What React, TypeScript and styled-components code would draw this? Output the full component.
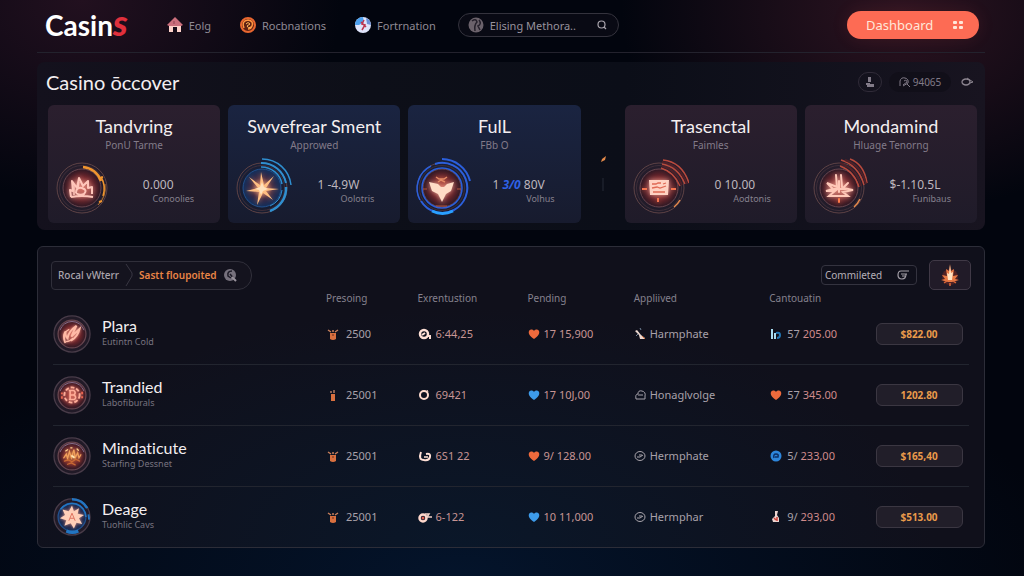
import React, { useId } from "react";
import styled, { createGlobalStyle } from "styled-components";

type Tone = "warm" | "cool";
type Glyph =
  | "crown"
  | "star"
  | "gem"
  | "card"
  | "spark"
  | "feather"
  | "gear"
  | "dust"
  | "sun";

interface Deck {
  title: string;
  sub: string;
  value: React.ReactNode;
  label: string;
  tone: Tone;
  glyph: Glyph;
}

interface Player {
  name: string;
  sub: string;
  glyph: Glyph;
  score: string;
  scoreIcon: MarkName;
  token: string;
  tokenIcon: MarkName;
  pending: string;
  pendingColor: string;
  status: string;
  statusIcon: MarkName;
  prefix: string;
  total: string;
  totalIcon: MarkName;
  price: string;
}

type MarkName =
  | "jar"
  | "pot"
  | "coinTail"
  | "ring"
  | "loop"
  | "coinKey"
  | "brush"
  | "cloud"
  | "check"
  | "bars"
  | "heart"
  | "disc"
  | "flask";

const glyphs: Record<Glyph, React.ReactNode> = {
  crown: (
    <g fill="none" stroke="#ffc6ba" strokeWidth="2" strokeLinejoin="round">
      <path d="M19 39 L18 32 L21 33 L20 23 L25 30 L27 20 L31 28 L36 23 L36 30 L40 29 L40 36" />
      <path d="M24 35 Q24 29 30 30 Q36 32 32 36 Q28 38 24 35 M19 39 Q30 37 41 39" />
      <path d="M22 27 V37 M27 24 L26 31" strokeWidth="1.5" />
    </g>
  ),
  star: (
    <g fill="#ffbf83">
      <path d="M29 14 L32 27 L42 18 L34 30 L47 31 L34 33 L41 42 L31 35 L25 47 L27 34 L14 33 L26 30 L17 19 L28 27 Z" />
      <path d="M30 24 L32 29 L36 31 L31 33 L29 37 L27 32 L23 31 L28 29 Z" fill="#ffe2bd" />
    </g>
  ),
  gem: (
    <g fill="#ffdcc6">
      <path d="M17 24 L26 26 L29 29 L32 29 L35 26 L42 24 L39 33 L34 36 L30 44 L26 36 L20 33 Z" />
      <path d="M24 19 L27 21 H32 L35 19 M26 24 L29 22 L33 24" stroke="#e58b66" strokeWidth="1.5" fill="none" />
      <path d="M11 31 H15 M45 31 H49 M24 48 H35" stroke="#b4553d" />
    </g>
  ),
  card: (
    <g>
      <path d="M20 22 H40 L39 37 H21 Z" fill="#ffd2c2" />
      <path
        d="M23 26 H27 L29 25 H32 M34 26 L37 25 M23 30 L28 29 L31 30 L37 28 M24 34 H36"
        stroke="#e06a54"
        strokeWidth="1.3"
        fill="none"
      />
      <path d="M13 31 H18 M42 31 H47 M29 40 V44" stroke="#f2734f" strokeWidth="2" />
    </g>
  ),
  spark: (
    <g fill="none" stroke="#ffc8b8" strokeWidth="2" strokeLinecap="round">
      <path d="M27 17 L28 29 L18 25 L24 31 L17 33 L26 33 L20 38 H39 L34 34 L44 32 L34 30 L39 25" />
      <path d="M32 17 L33 29 M30 23 V34 M25 31 H37" />
      <path d="M30 41 V44" stroke="#ff7b4a" />
    </g>
  ),
  feather: (
    <g fill="none" stroke="#ffb9a5" strokeWidth="3" strokeLinecap="round">
      <path d="M19 43 Q15 33 20 26 Q19 34 23 37 Q24 26 37 17 Q32 27 29 34 L42 22 Q39 34 29 40" />
      <path d="M21 42 Q27 42 31 37 M18 28 L25 23" strokeWidth="2" />
    </g>
  ),
  gear: (
    <g fill="none" stroke="#ffad98" strokeWidth="3">
      <circle cx="30" cy="30" r="12" strokeDasharray="6 3" />
      <path d="M25 23 H33 Q37 26 33 30 Q38 33 34 37 H25 M27 24 V36 M27 30 H33" strokeWidth="2.5" />
      <path d="M14 26 V29 M14 32 V36 M46 25 V29 M46 32 V35" stroke="#e96550" />
    </g>
  ),
  dust: (
    <g fill="none" stroke="#f0a05c" strokeWidth="2" strokeLinecap="round">
      <path d="M17 33 L21 27 L23 34 L26 23 L29 33 L33 20 L35 33 L39 25 L41 33 L44 28" />
      <path d="M18 38 L24 36 L30 39 L36 35 L42 38 M23 43 L29 41 L35 44" stroke="#c96a35" />
      <path d="M20 22 L23 20 M38 19 L40 21 M28 17 H30" stroke="#ffd08f" />
      <path d="M30 30 L33 32" stroke="#ffe2ad" strokeWidth="3" />
    </g>
  ),
  sun: (
    <g>
      <path
        d="M30 12 L33 21 L41 16 L39 25 L49 27 L41 32 L46 41 L37 39 L33 48 L28 40 L18 44 L21 35 L11 32 L19 27 L15 18 L25 21 Z"
        fill="#ffcfb8"
      />
      <path d="M25 36 L30 24 L35 36 M27 32 H33" stroke="#dd705c" strokeWidth="1.5" fill="none" />
    </g>
  ),
};

const arcs: Partial<Record<Glyph, React.ReactNode>> = {
  crown: (
    <g stroke="#f0952f" fill="none">
      <path d="M31 9 A21 21 0 0 1 49 23" strokeWidth="2.5" />
      <path d="M49 19 A23 23 0 0 1 51 38" strokeWidth="1.5" />
      <path d="M53 26 A24 24 0 0 1 46 47" strokeWidth="1" opacity="0.7" />
      <path d="M48 20 L51 19 M47 44 L50 43" strokeWidth="2" />
    </g>
  ),
  star: (
    <g stroke="#2f8fd0" fill="none">
      <path d="M30 1 A29 29 0 0 1 59 27" strokeWidth="1.5" />
      <path d="M29 5 A25 25 0 0 1 54 25" strokeWidth="2" />
      <path d="M29 9 A21 21 0 0 1 50 26" strokeWidth="1.5" />
      <path d="M54 29 A24 24 0 0 1 38 53" strokeWidth="2.5" />
      <path d="M50 32 A20 20 0 0 1 38 48" strokeWidth="1" />
    </g>
  ),
  gem: (
    <g stroke="#2b5fdc" fill="none">
      <path d="M30 1 A29 29 0 0 1 58 23" strokeWidth="2" />
      <path d="M23 6 A25 25 0 1 1 9 43" strokeWidth="2" />
      <path d="M8 42 A25 25 0 0 1 19 8" strokeWidth="1.5" />
      <circle cx="30" cy="30" r="20" strokeWidth="1.5" />
      <path d="M20 53 A25 25 0 0 0 41 53" stroke="#2aa0ff" strokeWidth="3" />
    </g>
  ),
  card: (
    <g stroke="#b94a3d" fill="none" strokeWidth="1.5">
      <path d="M34 2 Q53 4 60 25" />
      <path d="M33 6 Q49 9 56 26" />
      <path d="M32 10 Q45 14 51 28" />
      <path d="M33 4 Q51 7 58 26 M33 8 Q47 12 53 27" stroke="#4f2028" strokeWidth="2" />
      <path d="M51 42 A24 24 0 0 1 45 49" stroke="#e58a4b" />
    </g>
  ),
  spark: (
    <g stroke="#b94a3d" fill="none" strokeWidth="1.5">
      <path d="M41 1 Q55 6 58 25" />
      <path d="M32 2 Q49 7 55 27" />
      <path d="M31 8 Q45 13 50 29" />
      <path d="M36 2 Q52 7 57 26 M31 5 Q47 10 52 28" stroke="#4f2028" strokeWidth="2" />
      <path d="M51 41 A24 24 0 0 1 45 49" stroke="#e58a4b" />
    </g>
  ),
  sun: (
    <g stroke="#2275c2" fill="none">
      <path d="M30 2 A28 28 0 0 1 54 16" strokeWidth="4" />
      <path d="M12 18 A22 22 0 0 1 52 30" strokeWidth="2.5" />
      <path d="M56 26 L57 34" strokeWidth="3" />
      <path d="M21 52 A23 23 0 0 0 40 52" strokeWidth="5" />
    </g>
  ),
};

const Emblem: React.FC<{ glyph: Glyph; size: number; framed?: boolean }> = ({
  glyph,
  size,
  framed,
}) => {
  const id = useId();
  const blue = glyph === "star" || glyph === "sun";
  return (
    <svg width={size} height={size} viewBox="0 0 60 60" aria-hidden="true">
      <defs>
        <radialGradient id={`${id}core`}>
          <stop offset="0" stopColor={glyph === "dust" ? "#a65427" : "#c8493c"} />
          <stop offset="0.55" stopColor={blue ? "#3a2440" : "#74262b"} />
          <stop offset="1" stopColor={blue ? "#12305c" : "#2c1824"} />
        </radialGradient>
        <filter id={`${id}glow`} x="-30%" y="-30%" width="160%" height="160%">
          <feGaussianBlur stdDeviation="2.5" />
        </filter>
      </defs>
      {framed && (
        <circle cx="30" cy="30" r="28.5" fill="#211a27" stroke="#493c49" strokeWidth="2" />
      )}
      {!framed && (
        <g fill="none" stroke="#5d4245">
          <circle cx="30" cy="30" r="25" />
          <circle cx="30" cy="30" r="22.5" stroke="#3e2e39" />
        </g>
      )}
      <circle
        cx="30"
        cy="30"
        r={framed ? 22 : 19}
        fill={`url(#${id}core)`}
        stroke={blue ? "#23508c" : "#69464f"}
        strokeWidth={framed ? 2 : 1}
      />
      {framed && !blue && (
        <path d="M11 24 A20 20 0 0 1 49 24" stroke="#8c7390" strokeWidth="1.5" fill="none" />
      )}
      {arcs[glyph]}
      <g filter={`url(#${id}glow)`} opacity="0.7">
        {glyphs[glyph]}
      </g>
      {glyphs[glyph]}
    </svg>
  );
};

const marks: Record<MarkName, React.ReactNode> = {
  jar: (
    <>
      <path d="M4 6 H10 V12 Q7 14 4 12 Z" fill="#d9703f" />
      <path d="M2 3 L5 5 M12 3 L9 5 M6 4 H8" stroke="#c9805c" strokeWidth="1.5" />
      <path d="M6 8 H8" stroke="#6e2d1c" />
    </>
  ),
  pot: (
    <>
      <path d="M5 6 H9 V13 H5 Z" fill="#d9703f" />
      <path d="M4 4 H6 M8 2 V5" stroke="#b07a62" strokeWidth="1.5" />
    </>
  ),
  coinTail: (
    <>
      <circle cx="6" cy="7" r="4" fill="none" stroke="#ffe0d6" strokeWidth="2.5" />
      <path d="M4 8 L7 6 M9 9 H12 V12" stroke="#ffe0d6" strokeWidth="2" fill="none" />
    </>
  ),
  ring: (
    <>
      <circle cx="6" cy="7" r="4" fill="none" stroke="#ffdccf" strokeWidth="2" />
      <path d="M9 2 L10 4" stroke="#ffdccf" fill="none" />
    </>
  ),
  loop: (
    <>
      <path d="M3 3 Q0 11 6 11 M8 5 Q13 4 12 8 Q11 12 6 11" stroke="#ffe0d6" strokeWidth="2" fill="none" />
      <path d="M6 8 H10" stroke="#ffe0d6" strokeWidth="1.5" />
    </>
  ),
  coinKey: (
    <>
      <circle cx="5" cy="8" r="3.5" fill="none" stroke="#ffd8cc" strokeWidth="2.5" />
      <path d="M7 4 H11 L9 7 H14" stroke="#f3d2c8" strokeWidth="1.5" fill="none" />
      <circle cx="5" cy="8" r="1.5" fill="#df5b4d" />
    </>
  ),
  brush: (
    <>
      <path d="M1 4 L3 3 L7 8 L11 11 L10 12 H6 L5 8 Z" fill="#ecd8d0" />
      <path d="M6 1 L7 3 M2 9 L4 7" stroke="#74859a" />
      <path d="M8 9 L11 12" stroke="#e07a45" />
    </>
  ),
  cloud: (
    <path
      d="M2 11 Q1 6 4 6 Q4 2 8 3 Q12 4 11 8 V11 Z M4 7 H9"
      stroke="#a5a1aa"
      fill="none"
    />
  ),
  check: (
    <>
      <ellipse cx="6" cy="7" rx="5" ry="4.5" stroke="#aaa5ac" fill="none" />
      <path d="M3 8 L6 8 L9 6 M5 6 H8" stroke="#aaa5ac" fill="none" />
    </>
  ),
  bars: (
    <>
      <path d="M3 2 V12 M6 6 V12" stroke="#a9dcf0" strokeWidth="2" />
      <path d="M7 6 Q11 5 11 8 Q11 11 8 11" stroke="#2276b4" strokeWidth="2" fill="none" />
    </>
  ),
  heart: (
    <path
      d="M7 12 C3 9 1 7 2 4 C3 2 6 2 7 4 C8 2 11 2 12 4 C13 7 11 9 7 12 Z"
      fill="currentColor"
    />
  ),
  disc: (
    <>
      <circle cx="7" cy="7" r="5.5" fill="#2d86dc" />
      <path d="M5 9 Q4 5 7 5 Q10 5 9 8 H6" stroke="#0c2f66" strokeWidth="1.5" fill="none" />
    </>
  ),
  flask: (
    <>
      <path d="M6 1 H9 L8 5 L10 8 V12 H4 L3 9 L6 6 Z" fill="#ecd3cf" />
      <path d="M5 8 L7 10 M8 7 V11" stroke="#cc4038" strokeWidth="1.5" />
    </>
  ),
};

const Mark: React.FC<{ name: MarkName; color?: string }> = ({ name, color }) => (
  <svg width="14" height="14" viewBox="0 0 14 14" color={color} aria-hidden="true">
    {marks[name]}
  </svg>
);

const decks: Deck[] = [
  { title: "Tandvring", sub: "PonU Tarme", value: "0.000", label: "Conoolies", tone: "warm", glyph: "crown" },
  { title: "Swvefrear Sment", sub: "Approwed", value: "1 -4.9W", label: "Oolotris", tone: "cool", glyph: "star" },
  {
    title: "FulL",
    sub: "FBb O",
    value: (
      <>
        1 <b>3/0</b> 80V
      </>
    ),
    label: "Volhus",
    tone: "cool",
    glyph: "gem",
  },
  { title: "Trasenctal", sub: "Faimles", value: "0 10.00", label: "Aodtonis", tone: "warm", glyph: "card" },
  { title: "Mondamind", sub: "Hluage Tenorng", value: "$-1.10.5L", label: "Funibaus", tone: "warm", glyph: "spark" },
];

const players: Player[] = [
  {
    name: "Plara", sub: "Eutintn Cold", glyph: "feather",
    score: "2500", scoreIcon: "jar", token: "6:44,25", tokenIcon: "coinTail",
    pending: "17 15,900", pendingColor: "#ee6a3c",
    status: "Harmphate", statusIcon: "brush",
    prefix: "57", total: "205.00", totalIcon: "bars", price: "$822.00",
  },
  {
    name: "Trandied", sub: "Labofiburals", glyph: "gear",
    score: "25001", scoreIcon: "pot", token: "69421", tokenIcon: "ring",
    pending: "17 10J,00", pendingColor: "#3d9bea",
    status: "Honaglvolge", statusIcon: "cloud",
    prefix: "57", total: "345.00", totalIcon: "heart", price: "1202.80",
  },
  {
    name: "Mindaticute", sub: "Starfing Dessnet", glyph: "dust",
    score: "25001", scoreIcon: "jar", token: "6S1 22", tokenIcon: "loop",
    pending: "9/ 128.00", pendingColor: "#ee6a3c",
    status: "Hermphate", statusIcon: "check",
    prefix: "5/", total: "233,00", totalIcon: "disc", price: "$165,40",
  },
  {
    name: "Deage", sub: "Tuohlic Cavs", glyph: "sun",
    score: "25001", scoreIcon: "jar", token: "6-122", tokenIcon: "coinKey",
    pending: "10 11,000", pendingColor: "#3d9bea",
    status: "Hermphar", statusIcon: "check",
    prefix: "9/", total: "293,00", totalIcon: "flask", price: "$513.00",
  },
];

const App: React.FC = () => {
  return (
    <Page>
      <GlobalStyle />
      <Header>
        <Logo href="#">
          Casin<span>s</span>
        </Logo>
        <Nav>
          <NavLink href="#">
            <svg width="18" height="18" viewBox="0 0 18 18" aria-hidden="true">
              <path d="M3 8 H15 V16 H11 V11 H7 V16 H3 Z" fill="#ffd3cb" />
              <path d="M1 9 L9 1 L17 9 L15 10 H3 Z" fill="#cb6f7c" />
              <path d="M8 5 V8" stroke="#8f4453" />
            </svg>
            Eolg
          </NavLink>
          <NavLink href="#">
            <svg width="18" height="18" viewBox="0 0 18 18" aria-hidden="true">
              <circle cx="9" cy="9" r="7" fill="#5d2113" stroke="#e8662f" strokeWidth="2" />
              <path d="M5 12 Q2 5 9 4 Q15 5 13 10 Q12 13 9 13" stroke="#ff9540" strokeWidth="1.5" fill="none" />
              <path d="M7 8 Q9 5 11 8 L8 10 Q9 13 12 11" stroke="#ffb75c" fill="none" />
            </svg>
            Rocbnations
          </NavLink>
          <NavLink href="#">
            <svg width="18" height="18" viewBox="0 0 18 18" aria-hidden="true">
              <circle cx="9" cy="9" r="8" fill="#dfe4fa" />
              <path d="M1 9 A8 8 0 0 1 9 1 L10 6 L5 9 Z" fill="#4ba0ee" />
              <path d="M12 2 A8 8 0 0 1 17 9 L13 8 Z" fill="#6a8fd8" />
              <path d="M10 4 L8 8 L11 9 L8 14 M7 6 L12 11" stroke="#bc3550" strokeWidth="1.5" fill="none" />
            </svg>
            Fortrnation
          </NavLink>
        </Nav>
        <Search>
          <svg width="16" height="16" viewBox="0 0 16 16" aria-hidden="true">
            <circle cx="8" cy="8" r="7.5" fill="#6b626b" />
            <path d="M4 4 Q8 1 9 5 Q6 8 7 14 M11 3 Q14 7 10 9 L12 13" stroke="#25202b" strokeWidth="1.5" fill="none" />
          </svg>
          <input type="search" placeholder="Elising Methora.." aria-label="Elising Methora" />
          <svg width="12" height="12" viewBox="0 0 12 12" aria-hidden="true">
            <path d="M8 8 L10 10" stroke="#aaa5ae" strokeWidth="1.3" />
            <circle cx="5.5" cy="5.5" r="3.5" stroke="#aaa5ae" strokeWidth="1.2" fill="none" />
          </svg>
        </Search>
        <DashboardButton type="button">
          Dashboard
          <svg width="12" height="12" viewBox="0 0 12 12" fill="#ffe7da" aria-hidden="true">
            <rect x="1" y="2" width="4" height="3" rx="1" />
            <rect x="7" y="2" width="4" height="3" rx="1" />
            <rect x="1" y="7" width="4" height="3" rx="1" />
            <rect x="7" y="7" width="4" height="3" rx="1" />
          </svg>
        </DashboardButton>
      </Header>

      <Discover>
        <DiscoverHead>
          <h1>Casino ōccover</h1>
          <RoundTool type="button" aria-label="Profile">
            <svg width="10" height="12" viewBox="0 0 10 12" fill="#827b88" aria-hidden="true">
              <path d="M3 1 H6 V6 H3 Z M1 7 H5 V9 H1 Z M4 8 H9 V11 H2 V9 Z" />
            </svg>
          </RoundTool>
          <CountTool type="button">
            <svg width="12" height="12" viewBox="0 0 12 12" stroke="#827b88" fill="none" aria-hidden="true">
              <path d="M1 10 V5 Q2 1 6 2 Q10 3 9 7 L4 10 M5 5 Q8 3 8 6 L4 9 M8 8 L11 11" />
            </svg>
            94065
          </CountTool>
          <BareTool type="button" aria-label="Keys">
            <svg width="12" height="10" viewBox="0 0 12 10" stroke="#8b848f" fill="none" aria-hidden="true">
              <ellipse cx="5" cy="5" rx="4" ry="3" strokeWidth="1.3" />
              <path d="M6 1 L12 5 L9 6" />
            </svg>
          </BareTool>
        </DiscoverHead>
        <Decks>
          {decks.map((deck, i) => (
            <React.Fragment key={deck.title}>
              {i === 3 && (
                <Divider>
                  <svg width="8" height="36" viewBox="0 0 8 36" aria-hidden="true">
                    <path d="M2 7 L3 4 L7 1 L6 5 Z" fill="#e58a4a" />
                    <path d="M4 23 V36" stroke="#272b36" />
                  </svg>
                </Divider>
              )}
              <DeckCard $tone={deck.tone}>
                <h2>{deck.title}</h2>
                <p>{deck.sub}</p>
                <DeckBody>
                  <Emblem glyph={deck.glyph} size={60} />
                  <DeckStat>
                    <strong>{deck.value}</strong>
                    <span>{deck.label}</span>
                  </DeckStat>
                </DeckBody>
              </DeckCard>
            </React.Fragment>
          ))}
        </Decks>
      </Discover>

      <Board>
        <Toolbar>
          <Crumbs>
            <Crumb href="#">Rocal vWterr</Crumb>
            <svg width="8" height="28" viewBox="0 0 8 28" aria-hidden="true">
              <path d="M1 3 L7 12 V15 L1 25" stroke="#383642" fill="none" />
            </svg>
            <Crumb href="#" $active>
              Sastt floupoited
            </Crumb>
            <svg width="14" height="14" viewBox="0 0 14 14" aria-hidden="true">
              <circle cx="7" cy="7" r="6" fill="#76717d" />
              <path d="M9 3 Q4 3 5 8 L8 10 M7 6 L12 12" stroke="#1d1b27" strokeWidth="1.5" fill="none" />
              <path d="M9 9 L13 13" stroke="#9a949e" strokeWidth="2" />
            </svg>
          </Crumbs>
          <Filter>
            <select aria-label="Status">
              <option>Commileted</option>
            </select>
            <svg width="14" height="12" viewBox="0 0 14 12" stroke="#a49fa8" fill="none" aria-hidden="true">
              <path d="M13 2 H5 Q2 2 2 6 Q2 10 6 10 Q10 10 10 5 M5 5 H11 M6 7 H9" strokeWidth="1.2" />
            </svg>
          </Filter>
          <FlameButton type="button" aria-label="Hot">
            <svg width="24" height="24" viewBox="0 0 24 24" aria-hidden="true">
              <circle cx="12" cy="14" r="8" fill="#7b2a22" opacity="0.5" />
              <path d="M12 1 L13 8 L16 6 L15 13 L20 12 L17 16 L21 17 L14 19 H10 L3 17 L7 16 L4 12 L9 13 L8 6 L11 8 Z" fill="#e87a45" />
              <path d="M12 2 L13 10 L15 9 L14 17 H10 L9 10 L11 11 Z" fill="#ffe3c2" />
              <path d="M6 20 L9 18 M12 20 V23 M15 18 L18 20" stroke="#d9683a" strokeWidth="1.5" />
            </svg>
          </FlameButton>
        </Toolbar>
        <Table>
          <colgroup>
            <col style={{ width: "29.8%" }} />
            <col style={{ width: "10%" }} />
            <col style={{ width: "12%" }} />
            <col style={{ width: "11.6%" }} />
            <col style={{ width: "14.8%" }} />
            <col style={{ width: "11.6%" }} />
            <col style={{ width: "10.2%" }} />
          </colgroup>
          <thead>
            <tr>
              <th aria-label="Name" />
              <th>Presoing</th>
              <th>Exrentustion</th>
              <th>Pending</th>
              <th>Appliived</th>
              <th>Cantouatin</th>
              <th aria-label="Price" />
            </tr>
          </thead>
          <tbody>
            {players.map((player) => (
              <tr key={player.name}>
                <td>
                  <Identity>
                    <Emblem glyph={player.glyph} size={38} framed />
                    <div>
                      <h3>{player.name}</h3>
                      <p>{player.sub}</p>
                    </div>
                  </Identity>
                </td>
                <td>
                  <Entry $gap={6}>
                    <Mark name={player.scoreIcon} />
                    {player.score}
                  </Entry>
                </td>
                <td>
                  <Entry $gap={4} $accent>
                    <Mark name={player.tokenIcon} />
                    {player.token}
                  </Entry>
                </td>
                <td>
                  <Entry $gap={2} $accent>
                    <Mark name="heart" color={player.pendingColor} />
                    {player.pending}
                  </Entry>
                </td>
                <td>
                  <Entry $gap={2}>
                    <Mark name={player.statusIcon} />
                    {player.status}
                  </Entry>
                </td>
                <td>
                  <Entry $gap={4}>
                    <Mark name={player.totalIcon} color="#ee6a3c" />
                    <span>
                      {player.prefix} <em>{player.total}</em>
                    </span>
                  </Entry>
                </td>
                <td>
                  <PriceButton type="button">{player.price}</PriceButton>
                </td>
              </tr>
            ))}
          </tbody>
        </Table>
      </Board>
    </Page>
  );
};

const body = `"Noto Sans", "Open Sans", sans-serif`;
const display = `Lato, "Noto Sans", sans-serif`;

const GlobalStyle = createGlobalStyle`
  * {
    box-sizing: border-box;
  }

  body {
    margin: 0;
    background-color: #02050e;
    font-family: ${body};
    font-variant-ligatures: none;
    color: #f3eef0;
  }

  h1, h2, h3, p {
    margin: 0;
  }

  a {
    text-decoration: none;
  }

  button, input, select {
    font-family: inherit;
    margin: 0;
  }

  svg {
    flex: none;
  }
`;

const Page = styled.div`
  min-height: 100vh;
  padding: 0 39px 28px 37px;
  background:
    radial-gradient(ellipse 260px 200px at 8% 0%, #22101f 0%, transparent 100%),
    radial-gradient(ellipse 280px 200px at 88% 2%, #2c1320 0%, transparent 100%),
    radial-gradient(ellipse 60% 45% at 45% 100%, #04142b 0%, transparent 100%),
    #02050e;
`;

const Header = styled.header`
  display: flex;
  align-items: center;
  height: 53px;
  padding: 0 6px 2px 8px;
  border-bottom: 1px solid #23222d;
`;

const Logo = styled.a`
  margin-right: 38px;
  padding-bottom: 4px;
  font-family: ${display};
  font-size: 28px;
  font-weight: 700;
  line-height: 32px;
  color: #ffffff;

  > span {
    color: #e0303c;
    font-size: 36px;
    font-weight: 900;
    font-style: italic;
  }
`;

const Nav = styled.nav`
  display: flex;
  align-items: center;
  gap: 28px;
`;

const NavLink = styled.a`
  display: flex;
  align-items: center;
  gap: 5px;
  font-size: 11px;
  color: #8f8a94;
`;

const Search = styled.label`
  display: flex;
  align-items: center;
  gap: 6px;
  width: 161px;
  height: 24px;
  margin-left: 22px;
  padding: 0 10px 0 9px;
  border: 1px solid #34333d;
  border-radius: 12px;
  background: #090a14;

  > input {
    flex: 1;
    min-width: 0;
    padding: 0;
    border: 0;
    outline: 0;
    background: none;
    font-size: 11px;
    color: #98929c;
  }

  > input::placeholder {
    color: #98929c;
    opacity: 1;
  }
`;

const DashboardButton = styled.button`
  display: flex;
  align-items: center;
  justify-content: space-between;
  width: 132px;
  height: 28px;
  margin-left: auto;
  padding: 0 15px 0 19px;
  border: 0;
  border-radius: 14px;
  background: #fd6b54;
  box-shadow: 0 0 18px rgba(253, 90, 80, 0.1);
  font-size: 13px;
  color: #ffe7da;
`;

const Discover = styled.section`
  margin-top: 9px;
  padding: 8px 8px 7px 11px;
  border-radius: 8px;
  background: linear-gradient(90deg, #14111d 0%, #0d0f18 35%, #0b0e18 62%, #181420 100%);
`;

const DiscoverHead = styled.div`
  display: flex;
  align-items: center;
  height: 24px;
  margin: 0 0 11px -2px;

  > h1 {
    margin-right: auto;
    font-family: ${display};
    font-size: 20px;
    font-weight: 400;
    line-height: 24px;
  }
`;

const Tool = styled.button`
  display: flex;
  align-items: center;
  justify-content: center;
  height: 20px;
  padding: 0;
  border: 0;
  border-radius: 10px;
  background: none;
  font-size: 10px;
  color: #827b88;
`;

const RoundTool = styled(Tool)`
  width: 24px;
  border: 1px solid #302b38;
`;

const CountTool = styled(Tool)`
  gap: 2px;
  width: 62px;
  margin-left: 7px;
  background: #110f19;
`;

const BareTool = styled(Tool)`
  margin: 0 4px 0 10px;
`;

const Decks = styled.div`
  display: grid;
  grid-template-columns: repeat(3, minmax(0, 1fr)) 28px repeat(2, minmax(0, 1fr));
  gap: 8px;
`;

const Divider = styled.div`
  display: flex;
  align-items: center;
  justify-content: center;
  padding-top: 18px;
`;

const DeckCard = styled.article<{ $tone: Tone }>`
  padding: 11px 4px 5px;
  border-radius: 6px;
  background: ${({ $tone }) =>
    $tone === "cool"
      ? "linear-gradient(#1a2441, #171b2e)"
      : "linear-gradient(#2b1f2e, #1f1b29)"};
  text-align: center;

  > h2 {
    font-family: ${display};
    font-size: 18px;
    font-weight: 400;
    line-height: 20px;
  }

  > p {
    margin: 2px 0 6px;
    font-size: 10px;
    line-height: 14px;
    color: #827b89;
  }
`;

const DeckBody = styled.div`
  display: flex;
  align-items: center;
  justify-content: space-between;
  padding-right: 22px;
`;

const DeckStat = styled.div`
  display: flex;
  flex-direction: column;
  width: 72px;
  padding-top: 6px;

  > strong {
    font-size: 12px;
    font-weight: 400;
    line-height: 16px;
    color: #bdb6bd;
  }

  > strong b {
    color: #2f62e6;
    font-style: italic;
  }

  > span {
    font-size: 9px;
    line-height: 12px;
    text-align: right;
    color: #85808d;
  }
`;

const Board = styled.section`
  margin-top: 16px;
  padding: 13px 13px 0;
  border: 1px solid #2c2d38;
  border-radius: 6px;
  background:
    radial-gradient(ellipse 50% 80% at 45% 100%, #0a1729 0%, transparent 100%),
    #10101b;
`;

const Toolbar = styled.div`
  display: flex;
  align-items: center;
  height: 30px;
`;

const Crumbs = styled.nav`
  display: flex;
  align-items: center;
  gap: 6px;
  height: 29px;
  margin-right: auto;
  padding: 0 14px 0 6px;
  border: 1px solid #302f3a;
  border-radius: 4px 14px 14px 4px;
  background: #14131e;
`;

const Crumb = styled.a<{ $active?: boolean }>`
  font-size: 10px;
  font-weight: ${({ $active }) => ($active ? 600 : 500)};
  color: ${({ $active }) => ($active ? "#e98546" : "#aba5ad")};
`;

const Filter = styled.label`
  display: flex;
  align-items: center;
  width: 96px;
  height: 20px;
  padding: 0 6px 0 3px;
  border: 1px solid #34333f;
  border-radius: 4px;

  > select {
    flex: 1;
    min-width: 0;
    padding: 0;
    border: 0;
    outline: 0;
    appearance: none;
    background: none;
    font-size: 10px;
    color: #b5afb7;
  }
`;

const FlameButton = styled.button`
  display: flex;
  align-items: center;
  justify-content: center;
  width: 42px;
  height: 30px;
  margin-left: 12px;
  padding: 0;
  border: 1px solid #403946;
  border-radius: 5px;
  background: #211b28;
`;

const Table = styled.table`
  width: 100%;
  border-collapse: separate;
  border-spacing: 0;
  table-layout: fixed;
  padding: 0 2px;

  th {
    height: 14px;
    padding: 3px 0 0;
    font-size: 10px;
    font-weight: 400;
    line-height: 11px;
    text-align: left;
    color: #85818d;
  }

  td {
    height: 61px;
    padding: 0;
    border-bottom: 1px solid #22252f;
    vertical-align: middle;
    white-space: nowrap;
  }

  tbody tr:last-child td {
    height: 60px;
    border-bottom: 0;
  }
`;

const Identity = styled.div`
  display: flex;
  align-items: center;
  gap: 11px;

  > div {
    padding-bottom: 2px;
  }

  h3 {
    font-family: ${display};
    font-size: 16px;
    font-weight: 400;
    line-height: 18px;
  }

  p {
    font-size: 9px;
    line-height: 14px;
    color: #77727f;
  }
`;

const Entry = styled.div<{ $gap: number; $accent?: boolean }>`
  display: flex;
  align-items: center;
  gap: ${({ $gap }) => $gap}px;
  font-size: 11px;
  line-height: 16px;
  color: ${({ $accent }) => ($accent ? "#c79594" : "#a8a1aa")};

  em {
    font-style: normal;
    color: #cf8b8b;
  }
`;

const PriceButton = styled.button`
  display: block;
  width: 87px;
  max-width: 100%;
  height: 22px;
  padding: 0;
  border: 1px solid #3b3742;
  border-radius: 6px;
  background: #211e29;
  font-size: 10px;
  font-weight: 700;
  color: #e99a4b;
`;

export default App;
